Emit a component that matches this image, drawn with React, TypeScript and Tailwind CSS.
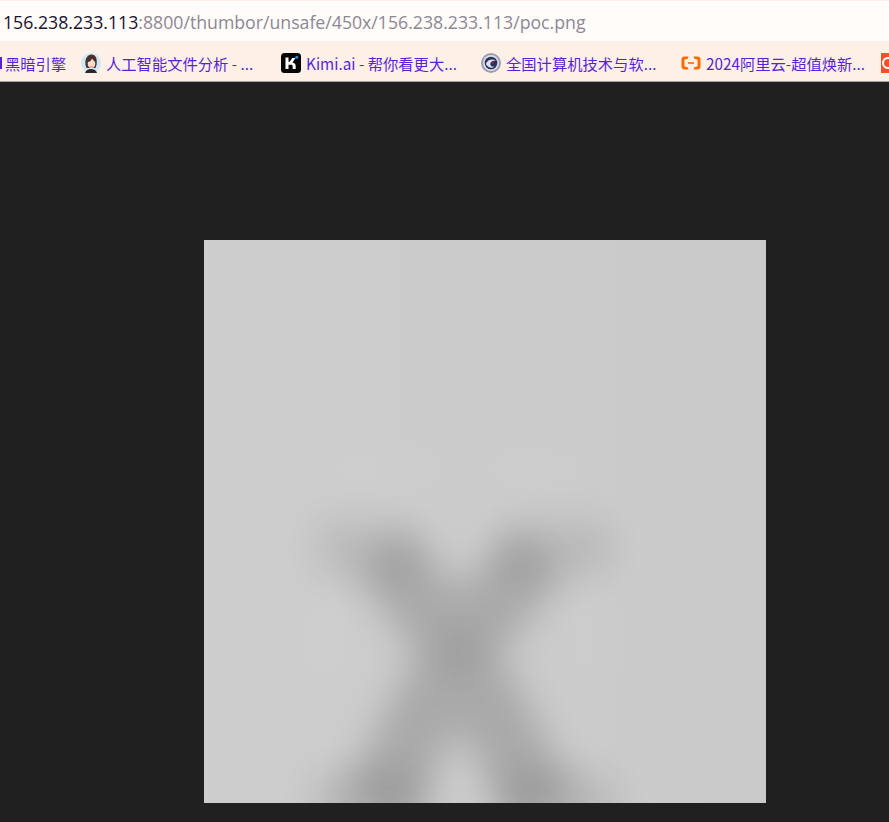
import React from "react";

const F = { fontFamily: '"Noto Sans CJK SC", "Noto Sans", sans-serif' };

function Avatar() {
  return (
    <svg width="20" height="20" viewBox="0 0 20 20" className="shrink-0">
      <circle cx="10" cy="10" r="10" fill="#cfe6f5" />
      <path d="M4 20c1-3 3-4 6-4s5 1 6 4z" fill="#26262c" />
      <path d="M4.500 12C3.500 5 7 1.500 10.500 1.500 14.500 1.500 16.500 5.500 15.500 12l-1 3h-9z" fill="#4b3029" />
      <ellipse cx="10.500" cy="10.500" rx="3.800" ry="5" fill="#f6dccd" />
      <path d="M6.500 9c2.500 0 4-1.500 4.500-4 .8 2 2 3.300 3.500 4V5l-4-1.500L6.500 5z" fill="#4b3029" />
      <rect x="9" y="13.500" width="3" height="0.800" fill="#c9605c" />
    </svg>
  );
}
function Kimi() {
  return (
    <svg width="20" height="20" viewBox="0 0 20 20" className="shrink-0">
      <rect width="20" height="20" rx="3.500" fill="#050505" />
      <path d="M4.500 4.500h3v4.300h1.200l2.500-3.800h3.300l-3 4.600c2.200.4 3.200 1.500 3.200 3.600V16h-3v-2.400c0-1.300-.6-1.900-2-1.900H7.500V16h-3z" fill="#fff" />
      <circle cx="15.700" cy="4.300" r="1.500" fill="#1e90ff" />
    </svg>
  );
}
function Seal() {
  return (
    <svg width="20" height="20" viewBox="0 0 20 20" className="shrink-0">
      <circle cx="10" cy="10" r="10" fill="#9a9db5" />
      <circle cx="10" cy="10" r="8" fill="#dcdde6" />
      <circle cx="10" cy="10" r="6.300" fill="#2a2f5c" />
      <path d="M4.800 11c2-4.500 6.500-5.500 10-3.200-3.300-.7-5.500 1-5.500 3.200s2.200 3.200 4.300 2.200c-2.300 2.700-6.800 1.500-8.800-2.200z" fill="#dfe2ee" />
      <circle cx="11.800" cy="9.800" r="1" fill="#c8202c" />
    </svg>
  );
}
function Ali() {
  return (
    <svg width="20" height="20" viewBox="0 0 20 20" className="shrink-0">
      <path d="M7.500 3.500H3.500A3 3 0 0 0 .5 6.500v7a3 3 0 0 0 3 3h4l-.8-2.300-2.700-.6a.8.800 0 0 1-.6-.8V7.200a.8.800 0 0 1 .6-.8l2.700-.6zM12.500 3.500h4a3 3 0 0 1 3 3v7a3 3 0 0 1-3 3h-4l.8-2.300 2.700-.6a.8.800 0 0 0 .6-.8V7.200a.8.800 0 0 0-.6-.8l-2.700-.6z" fill="#ff6a00" />
      <rect x="7" y="9.200" width="6" height="1.600" fill="#ff6a00" />
    </svg>
  );
}

function Mark({ children, title }: { children: React.ReactNode; title: string }) {
  return (
    <div className="flex w-[200px] shrink-0 items-center gap-[5px]">
      {children}
      <span className="whitespace-nowrap text-[15.300px] leading-5 text-[#5b1fd6]" style={F}>{title}</span>
    </div>
  );
}

export default function App() {
  return (
    <div className="flex h-[822px] w-[889px] flex-col overflow-hidden bg-[#202020]">
      <div className="h-[41px] shrink-0 border-t border-[#fdeee8] bg-[#fffcf9] pl-[3px] pt-[9px] text-[17.700px] leading-[24px] text-[#8d8796]" style={{ fontFamily: '"Open Sans", sans-serif' }}>
        <span className="text-[#1a1130]">156.238.233.113</span>:8800/thumbor/unsafe/450x/156.238.233.113/poc.png
      </div>
      <div className="relative flex h-[41px] shrink-0 items-center overflow-hidden border-b border-[#a9a4a0] bg-[#fdf1e7] pl-[81px] pt-[4px]">
        <div className="absolute left-0 top-[12px] flex items-center text-[15.300px] leading-5 text-[#5b1fd6]" style={F}>
          <span className="h-[12px] w-[2px] bg-[#5b1fd6]" />
          <span className="ml-[3px]">黑暗引擎</span>
        </div>
        <Mark title="人工智能文件分析 - ..."><Avatar /></Mark>
        <Mark title="Kimi.ai - 帮你看更大..."><Kimi /></Mark>
        <Mark title="全国计算机技术与软..."><Seal /></Mark>
        <Mark title="2024阿里云-超值焕新..."><Ali /></Mark>
        <div className="flex h-5 w-5 shrink-0 items-center justify-center bg-[#f4502c]">
          <span className="block h-3 w-3 -translate-x-[3px] rounded-full border-2 border-white" />
        </div>
      </div>
      <div className="flex-1">
        <div className="ml-[204px] mt-[158px] h-[563px] w-[562px] overflow-hidden bg-[#cccccc]">
          <svg width="562" height="563" viewBox="0 0 562 563">
            <defs>
              <filter id="b" x="-30%" y="-30%" width="160%" height="160%">
                <feGaussianBlur stdDeviation="18" />
              </filter>
              <filter id="h" x="-50%" y="-50%" width="200%" height="200%">
                <feGaussianBlur stdDeviation="10" />
              </filter>
              <filter id="c" x="-100%" y="-100%" width="300%" height="300%">
                <feGaussianBlur stdDeviation="16" />
              </filter>
              <linearGradient id="g" x1="0" y1="0" x2="1" y2="0">
                <stop offset="0" stopColor="#cdcdcd" />
                <stop offset="1" stopColor="#cacaca" />
              </linearGradient>
            </defs>
            <rect width="562" height="563" fill="url(#g)" />
            <g filter="url(#h)" fill="#ffffff" opacity="0.02">
              <ellipse cx="178" cy="228" rx="55" ry="22" />
              <ellipse cx="335" cy="228" rx="55" ry="22" />
              <ellipse cx="122" cy="400" rx="28" ry="40" />
              <ellipse cx="388" cy="400" rx="28" ry="40" />
            </g>
            <g filter="url(#b)" fill="none" stroke="#000000" opacity="0.17">
              <path d="M180 312 L254 410 L340 570" strokeWidth="70" />
              <path d="M332 312 L254 410 L170 570" strokeWidth="70" />
            </g>
            <g filter="url(#b)" fill="none" stroke="#000000" opacity="0.09">
              <path d="M115 308 L205 308" strokeWidth="50" />
              <path d="M305 308 L405 308" strokeWidth="50" />
              <path d="M110 570 L225 570" strokeWidth="70" />
              <path d="M295 570 L410 570" strokeWidth="70" />
            </g>
            <circle cx="254" cy="412" r="22" fill="#000000" opacity="0.06" filter="url(#c)" />
          </svg>
        </div>
      </div>
    </div>
  );
}
